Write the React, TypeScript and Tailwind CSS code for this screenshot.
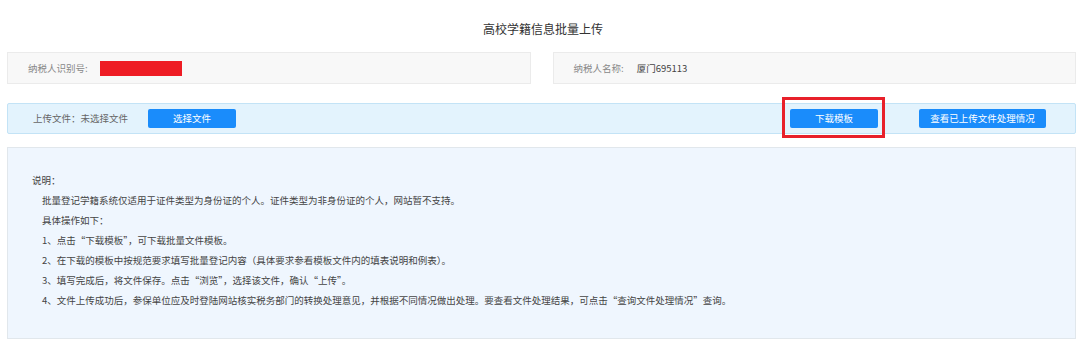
import React from 'react';

const steps = [
  '1、点击“下载模板”，可下载批量文件模板。',
  '2、在下载的模板中按规范要求填写批量登记内容（具体要求参看模板文件内的填表说明和例表）。',
  '3、填写完成后，将文件保存。点击“浏览”，选择该文件，确认“上传”。',
  '4、文件上传成功后，参保单位应及时登陆网站核实税务部门的转换处理意见，并根据不同情况做出处理。要查看文件处理结果，可点击“查询文件处理情况”查询。',
];

export default function App() {
  return (
    <div className="w-[1080px] h-[353px] bg-white pl-[7px] pr-[4px] font-['Noto_Sans_CJK_SC','Noto_Sans',sans-serif] text-[9.5px]">
      <h1 className="pt-[21px] mb-[15px] text-center text-[12px] leading-[16px] text-[#333] font-normal pl-[3px]">
        高校学籍信息批量上传
      </h1>

      <div className="grid grid-cols-2 gap-[22px]">
        <div className="h-[32px] flex items-center bg-[#f8f8f8] border border-[#ebebeb] pl-[20px]">
          <span className="text-[#888]">纳税人识别号:</span>
          <span className="ml-[12px] w-[82px] h-[15px] bg-[#ee1c24]" />
        </div>
        <div className="h-[32px] flex items-center bg-[#f8f8f8] border border-[#ebebeb] pl-[20px]">
          <span className="text-[#888]">纳税人名称:</span>
          <span className="ml-[13px] text-[#444]">厦门695113</span>
        </div>
      </div>

      <div className="mt-[19px] h-[31px] flex items-center bg-[#e3f3fd] border border-[#c3e3f6] rounded-[2px] pl-[25px] pr-[29px]">
        <span className="text-[#666]">上传文件：未选择文件</span>
        <button className="ml-[20px] w-[88px] h-[19px] rounded-[2px] bg-[#1a8cfb] text-white text-[9.5px]">
          选择文件
        </button>
        <div className="ml-auto flex items-center gap-[41px]">
          <div className="relative">
            <button className="w-[88px] h-[19px] rounded-[2px] bg-[#1a8cfb] text-white text-[9.5px]">
              下载模板
            </button>
            <span className="absolute -left-[8px] -top-[12px] -right-[7px] -bottom-[10px] border-[3px] border-[#e8202a] pointer-events-none" />
          </div>
          <button className="w-[127px] h-[19px] rounded-[2px] bg-[#1a8cfb] text-white text-[9.5px]">
            查看已上传文件处理情况
          </button>
        </div>
      </div>

      <div className="mt-[13px] bg-[#eff6fe] border border-[#e1e7ec] pt-[22px] pb-[28px] pl-[24px] leading-[20px] text-[#444]">
        <p>说明：</p>
        <div className="pl-[10px]">
          <p>批量登记学籍系统仅适用于证件类型为身份证的个人。证件类型为非身份证的个人，网站暂不支持。</p>
          <p>具体操作如下：</p>
          {steps.map((s) => (
            <p key={s}>{s}</p>
          ))}
        </div>
      </div>
    </div>
  );
}
